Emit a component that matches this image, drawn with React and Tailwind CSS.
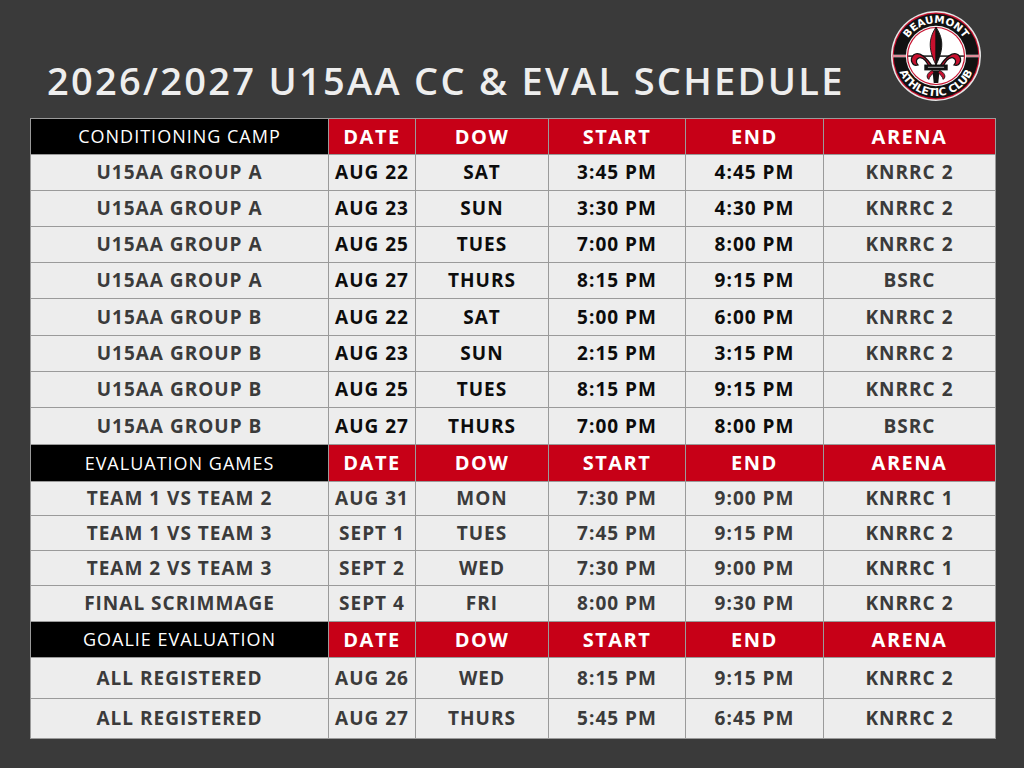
import React from "react";

const COLS = "grid-cols-[297px_86px_132px_136px_137px_171px]";

const sections = [
  {
    title: "CONDITIONING CAMP",
    dark: true,
    heights: ["h-[35px]", "h-[35px]", "h-[35px]", "h-[35px]", "h-[36px]", "h-[35px]", "h-[35px]", "h-[36px]"],
    headH: "h-[35px]",
    rows: [
      ["U15AA GROUP A", "AUG 22", "SAT", "3:45 PM", "4:45 PM", "KNRRC 2"],
      ["U15AA GROUP A", "AUG 23", "SUN", "3:30 PM", "4:30 PM", "KNRRC 2"],
      ["U15AA GROUP A", "AUG 25", "TUES", "7:00 PM", "8:00 PM", "KNRRC 2"],
      ["U15AA GROUP A", "AUG 27", "THURS", "8:15 PM", "9:15 PM", "BSRC"],
      ["U15AA GROUP B", "AUG 22", "SAT", "5:00 PM", "6:00 PM", "KNRRC 2"],
      ["U15AA GROUP B", "AUG 23", "SUN", "2:15 PM", "3:15 PM", "KNRRC 2"],
      ["U15AA GROUP B", "AUG 25", "TUES", "8:15 PM", "9:15 PM", "KNRRC 2"],
      ["U15AA GROUP B", "AUG 27", "THURS", "7:00 PM", "8:00 PM", "BSRC"],
    ],
  },
  {
    title: "EVALUATION GAMES",
    dark: false,
    headH: "h-[36px]",
    heights: ["h-[33px]", "h-[34px]", "h-[34px]", "h-[35px]"],
    rows: [
      ["TEAM 1 VS TEAM 2", "AUG 31", "MON", "7:30 PM", "9:00 PM", "KNRRC 1"],
      ["TEAM 1 VS TEAM 3", "SEPT 1", "TUES", "7:45 PM", "9:15 PM", "KNRRC 2"],
      ["TEAM 2 VS TEAM 3", "SEPT 2", "WED", "7:30 PM", "9:00 PM", "KNRRC 1"],
      ["FINAL SCRIMMAGE", "SEPT 4", "FRI", "8:00 PM", "9:30 PM", "KNRRC 2"],
    ],
  },
  {
    title: "GOALIE EVALUATION",
    dark: false,
    headH: "h-[35px]",
    heights: ["h-[40px]", "h-[39px]"],
    rows: [
      ["ALL REGISTERED", "AUG 26", "WED", "8:15 PM", "9:15 PM", "KNRRC 2"],
      ["ALL REGISTERED", "AUG 27", "THURS", "5:45 PM", "6:45 PM", "KNRRC 2"],
    ],
  },
];

const HEADS = ["DATE", "DOW", "START", "END", "ARENA"];

function Logo() {
  return (
    <svg width="90" height="90" viewBox="0 0 100 100">
      <defs>
        <path id="topArc" d="M 13.5 50 A 36.5 36.5 0 0 1 86.5 50" />
        <path id="botArc" d="M 5.5 50 A 44.5 44.5 0 0 0 94.5 50" />
      </defs>
      <circle cx="50" cy="50" r="50" fill="#e6e6e6" />
      <circle cx="50" cy="50" r="48.3" fill="#c8102e" />
      <circle cx="50" cy="50" r="47" fill="#111" />
      <rect x="2" y="48.6" width="96" height="2.8" fill="#f2f2f2" />
      <rect x="2" y="49.5" width="96" height="1" fill="#c8102e" />
      <circle cx="50" cy="50" r="33.5" fill="#f2f2f2" />
      <circle cx="50" cy="50" r="32.3" fill="#c8102e" />
      <circle cx="50" cy="50" r="31" fill="#fff" />
      <rect x="19" y="49.3" width="62" height="1.6" fill="#111" />
      <text fill="#fff" fontFamily="'DejaVu Sans', sans-serif" fontWeight="700" fontSize="11.5">
        <textPath href="#topArc" startOffset="50%" textAnchor="middle">BEAUMONT</textPath>
      </text>
      <text fill="#fff" fontFamily="'DejaVu Sans', sans-serif" fontWeight="700" fontSize="12">
        <textPath href="#botArc" startOffset="50%" textAnchor="middle">ATHLETIC CLUB</textPath>
      </text>
      <path d="M50 18 C43 29, 40 40, 50 60 Z" fill="#c8102e" stroke="#111" strokeWidth="1" />
      <path d="M50 18 C57 29, 60 40, 50 60 Z" fill="#111" stroke="#111" strokeWidth="1" />
      <path d="M46 62 C40 52, 31 44, 25 49 C20 54, 24 62, 30 60 C27 57, 28 53, 31 52 C36 51, 40 56, 43 64 Z" fill="#c8102e" stroke="#111" strokeWidth="1.4" />
      <path d="M54 62 C60 52, 69 44, 75 49 C80 54, 76 62, 70 60 C73 57, 72 53, 69 52 C64 51, 60 56, 57 64 Z" fill="#c8102e" stroke="#111" strokeWidth="1.4" />
      <rect x="37" y="59.5" width="26" height="6.5" fill="#111" />
      <rect x="41" y="62" width="18" height="1" fill="#bbb" />
      <path d="M46 66 L54 66 L52.5 80 L47.5 80 Z" fill="#111" />
      <path d="M46 66 C41 68, 38 73, 42 76 C43 73, 45 70, 48 69 Z" fill="#c8102e" stroke="#111" strokeWidth="1" />
      <path d="M54 66 C59 68, 62 73, 58 76 C57 73, 55 70, 52 69 Z" fill="#c8102e" stroke="#111" strokeWidth="1" />
    </svg>
  );
}

function Section({ s }) {
  const dataFont = "text-[19px] font-bold tracking-[1px]";
  return (
    <>
      <div className={`${s.headH} bg-black flex items-center justify-center text-white text-[18px] font-normal tracking-[1px]`}>
        {s.title}
      </div>
      {HEADS.map((h) => (
        <div key={h} className={`${s.headH} bg-[#c70017] flex items-center justify-center text-white text-[20px] font-bold tracking-[1.5px]`}>
          {h}
        </div>
      ))}
      {s.rows.map((r, i) =>
        r.map((c, j) => {
          const black = s.dark && j >= 1 && j <= 4;
          return (
            <div
              key={`${i}-${j}`}
              className={`${s.heights[i]} bg-[#ededed] flex items-center justify-center ${dataFont} ${black ? "text-[#0c0c0c]" : "text-[#3b3b3b]"}`}
            >
              {c}
            </div>
          );
        })
      )}
    </>
  );
}

export default function App() {
  return (
    <div className="w-[1024px] h-[768px] bg-[#3a3a3a] overflow-hidden" style={{ fontFamily: "'Open Sans', 'Liberation Sans', sans-serif" }}>
      <div className="h-[118px] flex justify-between">
        <div className="mt-[61px] ml-[47px] h-[38px] leading-none text-[38px] font-semibold tracking-[2.3px] text-[#eeeeee]">
          2026/2027 U15AA CC &amp; EVAL SCHEDULE
        </div>
        <div className="mt-[11px] mr-[43px]">
          <Logo />
        </div>
      </div>
      <div className={`ml-[30px] w-[966px] grid ${COLS} gap-px p-px bg-[#9a9a9a]`}>
        {sections.map((s) => (
          <Section key={s.title} s={s} />
        ))}
      </div>
    </div>
  );
}
